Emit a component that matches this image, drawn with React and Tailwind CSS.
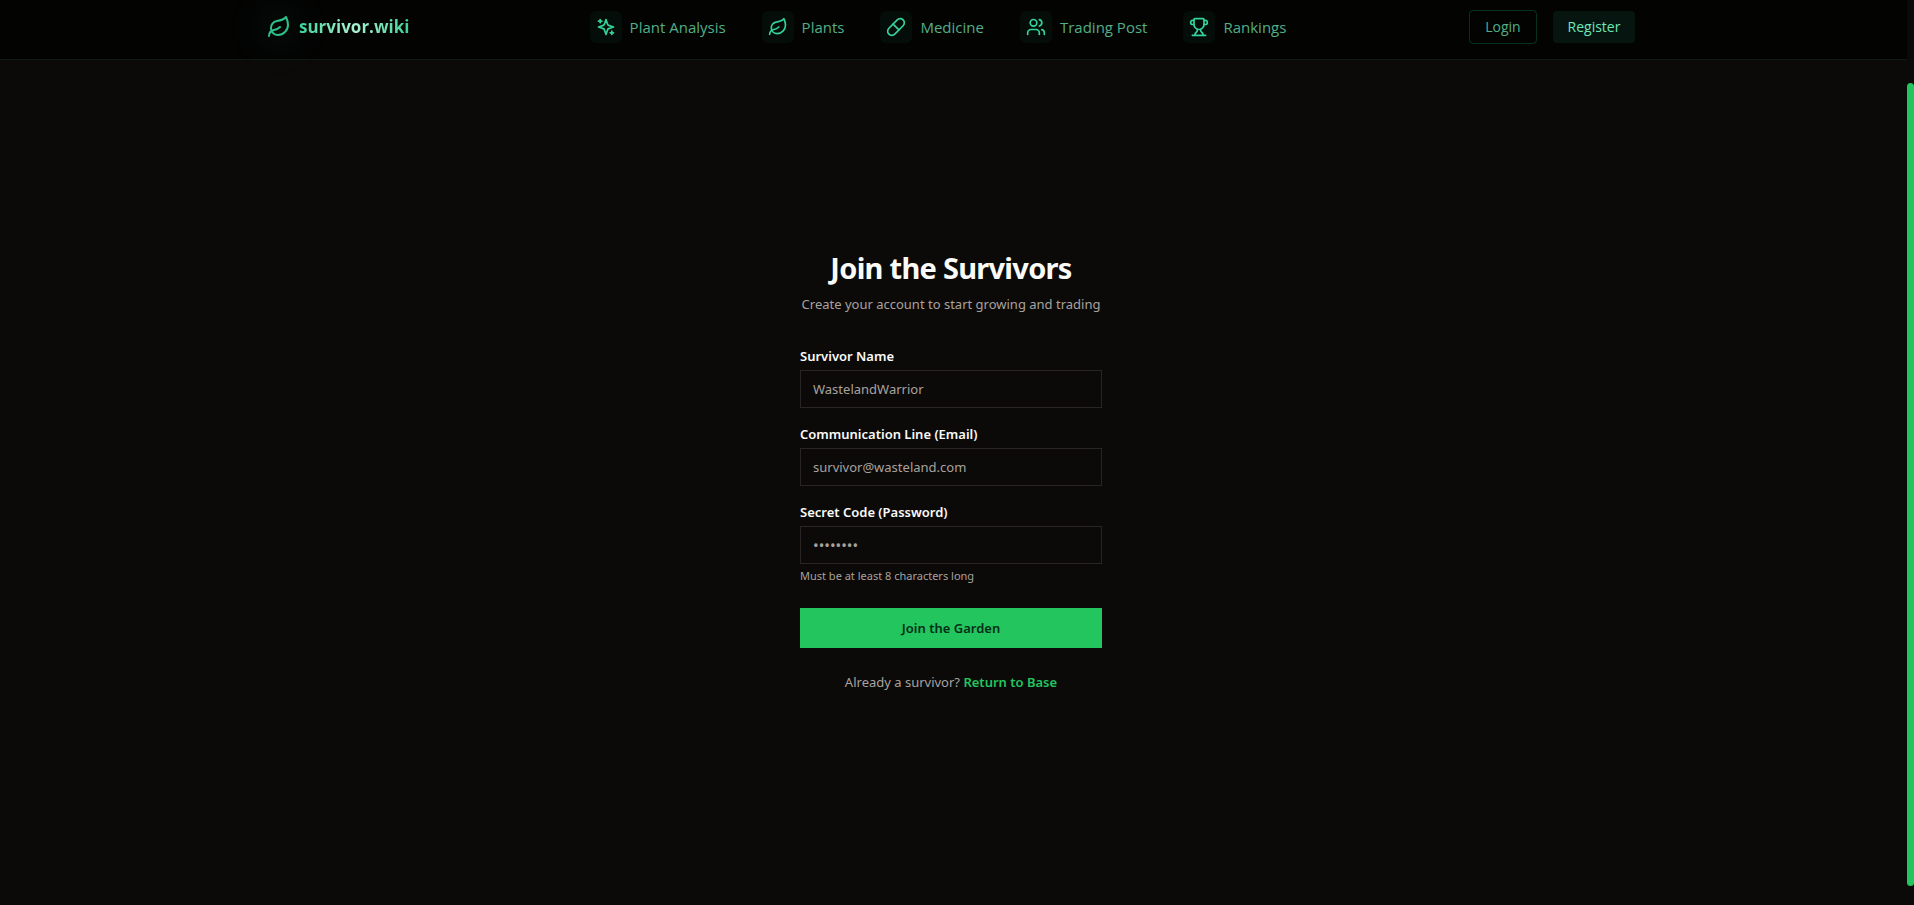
import { Leaf, Pill, Trophy, Users } from 'lucide-react'

function SparklesIcon({ className }) {
    return (
        <svg
            viewBox="0 0 24 24"
            fill="none"
            stroke="currentColor"
            strokeWidth="2"
            strokeLinecap="round"
            strokeLinejoin="round"
            className={className}
        >
            <path d="m12 3-1.912 5.813a2 2 0 0 1-1.275 1.275L3 12l5.813 1.912a2 2 0 0 1 1.275 1.275L12 21l1.912-5.813a2 2 0 0 1 1.275-1.275L21 12l-5.813-1.912a2 2 0 0 1-1.275-1.275L12 3Z" />
            <path d="M5 3v4" />
            <path d="M19 17v4" />
            <path d="M3 5h4" />
            <path d="M17 19h4" />
        </svg>
    )
}

const navItems = [
    { label: 'Plant Analysis', icon: SparklesIcon },
    { label: 'Plants', icon: Leaf },
    { label: 'Medicine', icon: Pill },
    { label: 'Trading Post', icon: Users },
    { label: 'Rankings', icon: Trophy },
]

const fields = [
    { id: 'name', label: 'Survivor Name', type: 'text', placeholder: 'WastelandWarrior' },
    { id: 'email', label: 'Communication Line (Email)', type: 'email', placeholder: 'survivor@wasteland.com' },
    { id: 'password', label: 'Secret Code (Password)', type: 'password', placeholder: '••••••••', hint: 'Must be at least 8 characters long' },
]

function Header() {
    return (
        <header className="border-b border-[#0d1a14] bg-[#030302] pr-[5px] font-['Open_Sans','Noto_Sans',sans-serif]">
            <div className="max-w-[1400px] mx-auto px-4 pt-2.5 pb-[15px] flex items-center justify-between">
                <a href="#" className="flex w-[140px] items-center gap-2">
                    <span className="relative flex">
                        <span className="absolute -inset-3 rounded-full bg-[#10b981]/5 blur-lg"></span>
                        <Leaf className="relative size-6 text-[#34d399] opacity-90" />
                    </span>
                    <span className="text-[17px] leading-7 font-bold bg-gradient-to-r from-[#34d399] via-[#a7f3d0] to-[#34d399] bg-clip-text text-transparent">
                        survivor.wiki
                    </span>
                </a>

                <nav className="flex items-center gap-9">
                    {navItems.map(({ label, icon: Icon }) => (
                        <a key={label} href="#" className="flex items-center gap-2 text-[15px] text-[#6ee7b7]/75">
                            <span className="size-8 rounded-md bg-[#040d0a] flex items-center justify-center">
                                <Icon className="size-5 text-[#34d399]" />
                            </span>
                            {label}
                        </a>
                    ))}
                </nav>

                <div className="flex items-center gap-4 text-sm">
                    <button type="button" className="h-[34px] w-[68px] rounded-sm border border-[#10b981]/25 text-[#6ee7b7]/75">
                        Login
                    </button>
                    <button type="button" className="h-8 w-[82px] rounded-sm bg-[#071510] text-[#6ee7b7]">
                        Register
                    </button>
                </div>
            </div>
        </header>
    )
}

function RegisterForm() {
    return (
        <div className="w-[302px] text-[13px] leading-5">
            <div className="text-center mb-8">
                <h1 className="text-[29px] leading-9 font-bold tracking-tight text-[#fafaf9] mb-2">Join the Survivors</h1>
                <p className="text-[#a8a29e] whitespace-nowrap">Create your account to start growing and trading</p>
            </div>

            <form onSubmit={(e) => e.preventDefault()}>
                <div className="flex flex-col gap-4">
                    {fields.map((field) => (
                        <div key={field.id} className="flex flex-col gap-1">
                            <label htmlFor={field.id} className="font-semibold text-[#fafaf9]">{field.label}</label>
                            <input
                                id={field.id}
                                type={field.type}
                                placeholder={field.placeholder}
                                className="h-[38px] w-full border border-[#292524] bg-transparent px-3 text-[#fafaf9] placeholder:text-[#a8a29e] [&[type=password]]:text-[15px]"
                            />
                            {field.hint && <p className="text-[11px] leading-4 text-[#a8a29e]">{field.hint}</p>}
                        </div>
                    ))}
                </div>
                <button type="submit" className="mt-6 h-10 w-full bg-[#22c55e] font-semibold text-[#052e16]">
                    Join the Garden
                </button>
            </form>

            <p className="mt-6 text-center text-[#a8a29e]">
                Already a survivor?{' '}
                <a href="#" className="font-semibold text-[#22c55e]">Return to Base</a>
            </p>
        </div>
    )
}

function App() {
    return (
        <div className="h-screen flex bg-[#0c0a09] font-['Noto_Sans','Open_Sans',sans-serif]">
            <div className="flex-1 flex flex-col">
                <Header />
                <main className="flex-1 flex items-center justify-center pb-6 pr-[5px]">
                    <RegisterForm />
                </main>
            </div>

            {/* Scrollbar */}
            <div className="w-[7px] flex flex-col pt-[83px] pb-[19px]">
                <div className="flex-1 rounded-full bg-[#22c55e]"></div>
            </div>
        </div>
    )
}

export default App
